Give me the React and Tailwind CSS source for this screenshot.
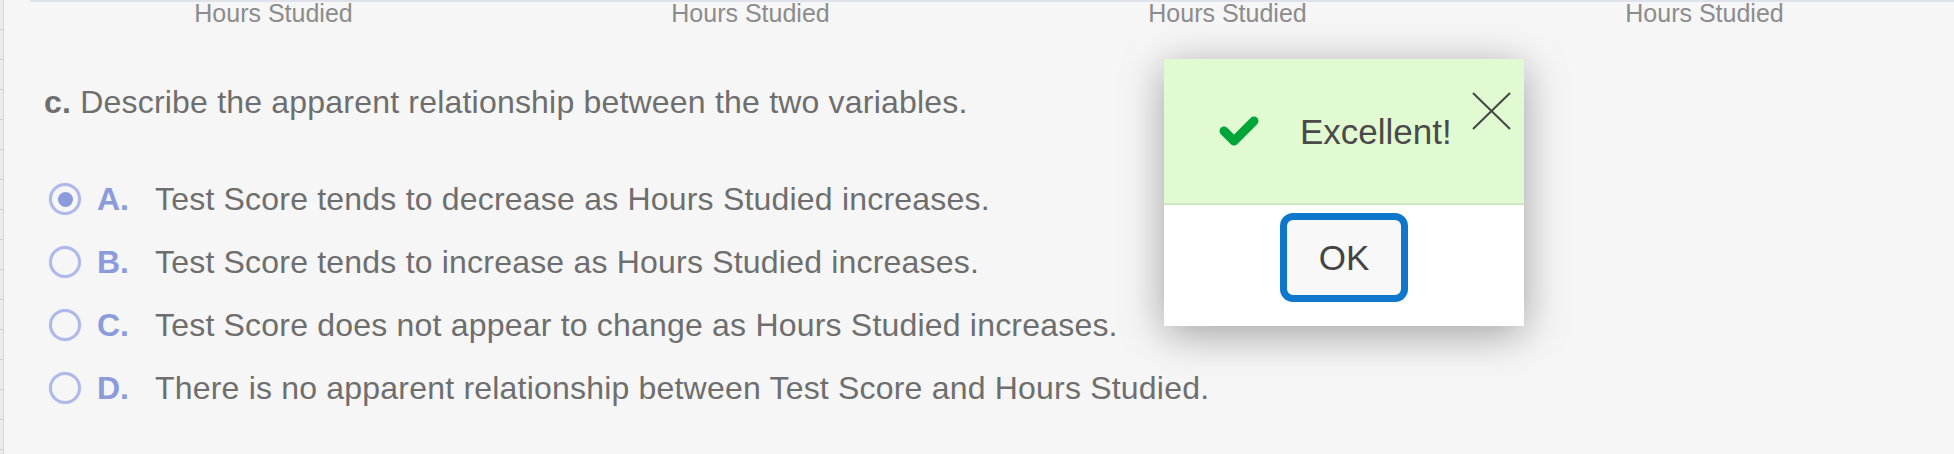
import React from "react";

const options = [
  { letter: "A.", text: "Test Score tends to decrease as Hours Studied increases.", selected: true },
  { letter: "B.", text: "Test Score tends to increase as Hours Studied increases.", selected: false },
  { letter: "C.", text: "Test Score does not appear to change as Hours Studied increases.", selected: false },
  { letter: "D.", text: "There is no apparent relationship between Test Score and Hours Studied.", selected: false },
];

export default function App() {
  return (
    <div className="relative w-[1954px] h-[454px] bg-[#f6f6f6] flex overflow-hidden font-['Liberation_Sans',Arial,Helvetica,sans-serif]">
      <div className="w-[4px] shrink-0 bg-[#ebebeb] border-r border-[#d6d6d6] flex flex-col">
        {Array.from({ length: 16 }).map((_, i) => (
          <div key={i} className="h-[30px] shrink-0 border-b border-[#cfcfcf]" />
        ))}
      </div>
      <div className="flex-1 pl-[26px]">
        <div className="border-t-2 border-[#dfe2ea]">
          <div className="grid grid-cols-[repeat(4,477px)] pl-[5px]">
            {[0, 1, 2, 3].map((i) => (
              <div key={i} className="text-center text-[25px] leading-[23px] text-[#8c8c8c]">
                Hours Studied
              </div>
            ))}
          </div>
          <div className="mt-[61px] pl-[14px] text-[32px] leading-none tracking-[0.2px] text-[#6e6e6e]">
            <span className="font-bold">c.</span> Describe the apparent relationship between the two variables.
          </div>
          <div className="mt-[65px] pl-[19px] flex flex-col gap-[31px]">
            {options.map((o) => (
              <div key={o.letter} className="flex items-center h-[32px]">
                <div className="w-[32px] h-[32px] shrink-0 rounded-full border-[3px] border-[#aeb8ea] flex items-center justify-center shadow-[0_0_1px_rgba(140,155,220,0.5)]">
                  {o.selected && <div className="w-[15px] h-[15px] rounded-full bg-[#8c9bdc]" />}
                </div>
                <div className="ml-[16px] w-[58px] shrink-0 text-[32px] leading-none font-bold text-[#8b9bdc]">
                  {o.letter}
                </div>
                <div className="text-[32px] leading-none tracking-[0.2px] text-[#6e6e6e] whitespace-nowrap">{o.text}</div>
              </div>
            ))}
          </div>
        </div>
      </div>

      <div className="absolute left-[1164px] top-[59px] w-[360px] h-[267px] bg-white flex flex-col shadow-[0_8px_40px_rgba(0,0,0,0.35)]">
        <div className="relative h-[144px] bg-[#e1fad2] flex items-center pl-[53px] border-b-2 border-[#cde8bc] box-content">
          <svg width="44" height="33" viewBox="0 0 44 33" className="shrink-0">
            <polyline points="7,16 17,26 37,6" fill="none" stroke="#00a53a" strokeWidth="9" strokeLinecap="round" strokeLinejoin="round" />
          </svg>
          <span className="ml-[39px] text-[35px] leading-none text-[#4a4a4a]">Excellent!</span>
          <svg width="39" height="38" viewBox="0 0 39 38" className="absolute top-[33px] right-[13px]">
            <line x1="1" y1="1" x2="38" y2="37" stroke="#444" strokeWidth="2" />
            <line x1="38" y1="1" x2="1" y2="37" stroke="#444" strokeWidth="2" />
          </svg>
        </div>
        <div className="flex justify-center pt-[8px]">
          <button className="w-[128px] h-[89px] rounded-[13px] border-[7px] border-[#0e77cc] bg-[#f8f8f8] text-[35px] leading-none text-[#444] flex items-center justify-center">
            OK
          </button>
        </div>
      </div>
    </div>
  );
}
